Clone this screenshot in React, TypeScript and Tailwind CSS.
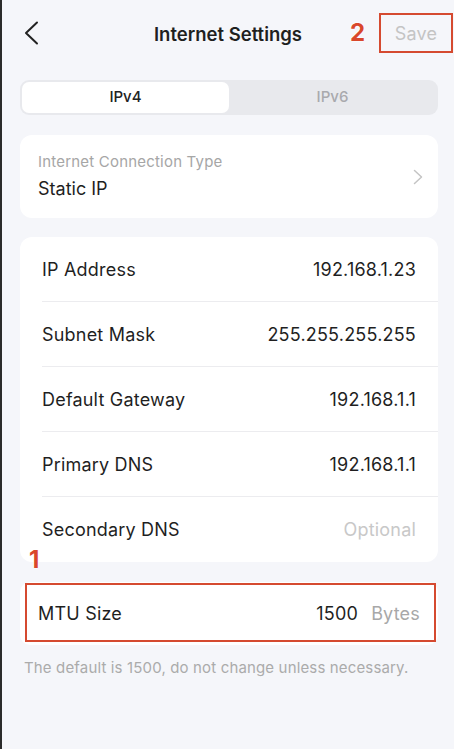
const rows = [
  { label: 'IP Address', value: '192.168.1.23' },
  { label: 'Subnet Mask', value: '255.255.255.255' },
  { label: 'Default Gateway', value: '192.168.1.1' },
  { label: 'Primary DNS', value: '192.168.1.1' },
  { label: 'Secondary DNS', value: 'Optional', muted: true },
];

export default function App() {
  return (
    <div className="w-[454px] h-[749px] bg-[#f5f6fa] border-l-2 border-[#2b2b2b] font-['Inter',sans-serif] text-[#1f1f1f] overflow-hidden">
      {/* header */}
      <div className="grid grid-cols-[1fr_auto_1fr] items-center h-[40px] mt-[13px]">
        <div className="pl-[21px] flex items-center">
          <svg width="16" height="24" viewBox="0 0 16 24" fill="none">
            <path d="M14 1.5 3 12l11 10.5" stroke="#222" strokeWidth="2" strokeLinecap="round" strokeLinejoin="round" />
          </svg>
        </div>
        <div className="text-[18.5px] font-semibold mt-[3px]">Internet Settings</div>
        <div className="flex items-center justify-end pr-[1px]">
          <span className="text-[24px] font-bold text-[#d9472b] leading-none mr-[14px] [text-shadow:0_0_2px_#fff,0_0_2px_#fff]">
            2
          </span>
          <div className="w-[74px] h-[40px] border-2 border-[#d54a30] flex items-center justify-center text-[18px] text-[#c4c4c4] tracking-[0.2px]">
            Save
          </div>
        </div>
      </div>

      {/* tabs */}
      <div className="ml-[18px] mr-[16px] mt-[27px] h-[35px] p-[2px] rounded-[9px] bg-[#e8e9ed] flex">
        <div className="flex-1 bg-white rounded-[7px] flex items-center justify-center text-[15px] font-medium text-[#222]">
          IPv4
        </div>
        <div className="flex-1 flex items-center justify-center text-[15px] font-medium text-[#a9a9ad]">IPv6</div>
      </div>

      {/* connection type */}
      <div className="ml-[18px] mr-[16px] mt-[20px] h-[83px] bg-white rounded-[12px] flex items-center pl-[18px] pr-[15px]">
        <div className="flex-1 flex flex-col">
          <span className="text-[15px] text-[#a6a6a6] leading-[18px] tracking-[0.2px]">Internet Connection Type</span>
          <span className="text-[18px] leading-[22px] mt-[7px]">Static IP</span>
        </div>
        <svg width="10" height="16" viewBox="0 0 10 16" fill="none">
          <path d="M1.5 1.5 8.5 8l-7 6.5" stroke="#c4c4c4" strokeWidth="1.5" strokeLinecap="round" strokeLinejoin="round" />
        </svg>
      </div>

      {/* static ip fields */}
      <div className="relative ml-[18px] mr-[16px] mt-[19px] bg-white rounded-[12px] pl-[22px]">
        {rows.map((r, i) => (
          <div
            key={r.label}
            className={`h-[65px] flex items-center justify-between pr-[22px] text-[18px] tracking-[0.2px] ${
              i < rows.length - 1 ? 'border-b border-[#ececef]' : ''
            }`}
          >
            <span>{r.label}</span>
            <span className={r.muted ? 'text-[#c8c8c8]' : ''}>{r.value}</span>
          </div>
        ))}
        <span className="absolute left-[9px] bottom-[-10px] text-[24px] font-bold leading-none text-[#d9472b] [text-shadow:0_0_2px_#fff,0_0_2px_#fff]">
          1
        </span>
      </div>

      {/* mtu */}
      <div className="relative ml-[18px] mr-[16px] mt-[20px] h-[63px] bg-white rounded-[10px] flex items-center pl-[18px] pr-[18px] text-[18px] tracking-[0.2px]">
        <span className="flex-1">MTU Size</span>
        <span>1500</span>
        <span className="ml-[13px] text-[#a8a8a8]">Bytes</span>
        <div className="absolute left-[5px] right-[2px] top-[1px] bottom-[3px] border-2 border-[#d54a30]" />
      </div>

      <p className="ml-[22px] mt-[12px] text-[15px] text-[#ababab] tracking-[0.15px]">
        The default is 1500, do not change unless necessary.
      </p>
    </div>
  );
}
